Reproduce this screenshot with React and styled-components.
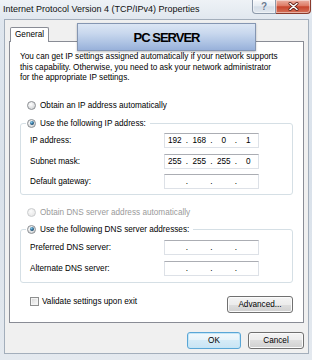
import React from "react";
import styled, { createGlobalStyle } from "styled-components";

const FONT = `"Liberation Sans", Arial, sans-serif`;

const GlobalStyle = createGlobalStyle`
  html, body {
    margin: 0;
    padding: 0;
    background: #dfe6ee;
  }
  body {
    font-family: ${FONT};
  }
`;

const Window = styled.div`
  position: relative;
  width: 312px;
  height: 360px;
  box-sizing: border-box;
  display: flex;
  flex-direction: column;
  overflow: hidden;
  font-family: ${FONT};
  color: #000;
  background: linear-gradient(180deg, #eef2f6 0%, #dfe6ee 6%, #d9e1ea 50%, #e4e9ef 100%);
`;

const TitleBar = styled.div`
  height: 19px;
  flex-shrink: 0;
  display: flex;
  align-items: flex-start;
`;

const Title = styled.div`
  padding-left: 3px;
  line-height: 18px;
  font-size: 9px;
  color: #111;
  white-space: nowrap;
`;

const Controls = styled.div`
  margin-left: auto;
  margin-right: 1px;
  display: flex;
`;

const CaptionButton = styled.div`
  width: ${(p) => p.$w}px;
  height: 14px;
  box-sizing: border-box;
  display: flex;
  align-items: center;
  justify-content: center;
  border: 1px solid ${(p) => (p.$close ? "#8a3a2c" : "#8d9aab")};
  border-top: none;
  border-left-width: ${(p) => (p.$close ? 0 : 1)}px;
  border-radius: ${(p) => (p.$close ? "0 0 4px 0" : "0 0 0 4px")};
  background: ${(p) =>
    p.$close
      ? "linear-gradient(180deg, #ebb1a3 0%, #dd7a64 45%, #c8452c 52%, #d5725a 100%)"
      : "linear-gradient(180deg, #f6f8fb 0%, #e6ecf2 45%, #d5dee8 52%, #e2e8ef 100%)"};
  box-shadow: inset 0 0 0 1px rgba(255, 255, 255, 0.45);
`;

const HelpGlyph = styled.span`
  font: bold 10px ${FONT};
  color: #6a7a90;
  text-shadow: 0 0 1px #fff;
`;

const Body = styled.div`
  flex: 1;
  margin: 0 3px 6px 4px;
  background: #f0f0f0;
  border: 1px solid #a3aebb;
  padding: 7px 4px 4px 4px;
  display: flex;
  flex-direction: column;
`;

const TabStrip = styled.div`
  display: flex;
  padding-left: 1px;
  position: relative;
  z-index: 1;
`;

const Tab = styled.div`
  width: 39px;
  height: 15px;
  box-sizing: border-box;
  border: 1px solid #898c95;
  border-bottom: none;
  border-radius: 2px 2px 0 0;
  background: #fff;
  margin-bottom: -1px;
  padding-left: 4px;
  font-size: 8.2px;
  line-height: 14px;
`;

const Panel = styled.div`
  height: 282px;
  box-sizing: border-box;
  background: #fff;
  border: 1px solid #898c95;
  padding: 10px 10px 0 10px;
  display: flex;
  flex-direction: column;
  font-size: 8.2px;
`;

const Intro = styled.p`
  margin: 0;
  line-height: 10.5px;
  white-space: nowrap;
`;

const OptionRow = styled.label`
  display: flex;
  align-items: center;
  gap: 4px;
  height: 12px;
  margin: ${(p) => p.$mt || 0}px 0 0 ${(p) => (p.$ml === undefined ? 7 : p.$ml)}px;
  color: ${(p) => (p.$disabled ? "#9a9a9a" : "#000")};
  white-space: nowrap;
`;

const Radio = styled.span`
  position: relative;
  flex-shrink: 0;
  width: 9px;
  height: 9px;
  box-sizing: border-box;
  border-radius: 50%;
  border: 1px solid ${(p) => (p.$disabled ? "#c9cbcd" : "#8c8f93")};
  background: ${(p) =>
    p.$disabled
      ? "radial-gradient(circle at 40% 35%, #fbfbfb, #e8e8e8 75%)"
      : "radial-gradient(circle at 40% 35%, #ffffff, #d6d8da 75%, #c4c6c8)"};

  &::after {
    content: "";
    display: ${(p) => (p.$checked ? "block" : "none")};
    position: absolute;
    inset: 1.5px;
    border-radius: 50%;
    background: radial-gradient(circle at 38% 32%, #8ed0f0 0%, #2f6f99 45%, #16334d 90%);
  }
`;

const Group = styled.fieldset`
  margin: ${(p) => p.$mt}px 0 0 0;
  padding: 0 0 0 5px;
  min-inline-size: 0;
  border: 1px solid #d5dfe5;
  border-radius: 3px;
`;

const Legend = styled.legend`
  padding: 0 4px 0 1px;
`;

const Rows = styled.div`
  display: flex;
  flex-direction: column;
  gap: 5.5px;
  padding: ${(p) => p.$pt}px 0 ${(p) => p.$pb}px 4px;
`;

const FieldRow = styled.div`
  display: flex;
  align-items: center;
  height: 15px;
`;

const FieldLabel = styled.span`
  width: 134px;
  flex-shrink: 0;
  white-space: nowrap;
`;

const IpBox = styled.div`
  width: 95px;
  height: 15px;
  box-sizing: border-box;
  display: flex;
  align-items: center;
  background: #fff;
  border: 1px solid #dde1e7;
  border-top-color: #abadb3;
  font-size: 8.2px;
`;

const Octet = styled.span`
  flex: 1;
  text-align: center;
`;

const Dot = styled.span`
  width: 5px;
  text-align: center;
`;

const Footer = styled.div`
  display: flex;
  align-items: flex-start;
  margin-top: 13.5px;
`;

const CheckRow = styled.label`
  display: flex;
  align-items: center;
  gap: 3px;
  height: 10px;
  margin-left: 10px;
  white-space: nowrap;
`;

const CheckBox = styled.span`
  width: 9px;
  height: 9px;
  box-sizing: border-box;
  border: 1px solid #8e8f8f;
  background: linear-gradient(135deg, #d4d4d4 0%, #eeeeee 60%, #fafafa 100%);
  box-shadow: inset 0 0 0 1px #f4f4f4;
`;

const Button = styled.button`
  width: ${(p) => p.$w}px;
  height: 17px;
  box-sizing: border-box;
  margin: 0 0 0 ${(p) => (p.$push ? "auto" : "0")};
  padding: 0;
  border: 1px solid ${(p) => (p.$default ? "#5aa6d6" : "#707070")};
  border-radius: 3px;
  font: 8.2px ${FONT};
  color: #000;
  background: ${(p) =>
    p.$default
      ? "linear-gradient(180deg, #f2f9fd 0%, #e6f3fa 50%, #d5ebf7 50%, #c9e4f4 100%)"
      : "linear-gradient(180deg, #f4f4f4 0%, #ececec 50%, #dedede 50%, #d0d0d0 100%)"};
  box-shadow: inset 0 0 0 1px ${(p) => (p.$default ? "#c4e6f7" : "#fbfbfb")};
`;

const ButtonRow = styled.div`
  display: flex;
  justify-content: flex-end;
  gap: 7px;
  margin-top: 9px;
`;

const Stamp = styled.div`
  position: absolute;
  left: 77px;
  top: 23px;
  width: 179px;
  height: 28px;
  box-sizing: border-box;
  display: flex;
  align-items: center;
  justify-content: center;
  border: 1px solid #8596b2;
  background: linear-gradient(180deg, #dce6f4 0%, #c9d8ee 35%, #afc4e4 70%, #98b1da 100%);
  box-shadow: 0 1px 2px rgba(0, 0, 0, 0.25);
  font: bold 13px ${FONT};
  letter-spacing: -1px;
  color: #000;
`;

function CloseIcon() {
  return (
    <svg width="11" height="9" viewBox="0 0 11 9">
      <path d="M2 1.5 L9 7.5 M9 1.5 L2 7.5" stroke="#5b1d12" strokeWidth="3" strokeLinecap="round" />
      <path d="M2 1.5 L9 7.5 M9 1.5 L2 7.5" stroke="#fff" strokeWidth="1.6" strokeLinecap="round" />
    </svg>
  );
}

function IpField({ value }) {
  const parts = value ? value.split(".") : ["", "", "", ""];
  return (
    <IpBox>
      <Octet>{parts[0]}</Octet>
      <Dot>.</Dot>
      <Octet>{parts[1]}</Octet>
      <Dot>.</Dot>
      <Octet>{parts[2]}</Octet>
      <Dot>.</Dot>
      <Octet>{parts[3]}</Octet>
    </IpBox>
  );
}

const ipRows = [
  { label: "IP address:", value: "192.168.0.1" },
  { label: "Subnet mask:", value: "255.255.255.0" },
  { label: "Default gateway:", value: "" },
];

const dnsRows = [
  { label: "Preferred DNS server:", value: "" },
  { label: "Alternate DNS server:", value: "" },
];

export default function App() {
  return (
    <>
      <GlobalStyle />
      <Window>
        <TitleBar>
          <Title>Internet Protocol Version 4 (TCP/IPv4) Properties</Title>
          <Controls>
            <CaptionButton $w={24}>
              <HelpGlyph>?</HelpGlyph>
            </CaptionButton>
            <CaptionButton $w={35} $close>
              <CloseIcon />
            </CaptionButton>
          </Controls>
        </TitleBar>

        <Body>
          <TabStrip>
            <Tab>General</Tab>
          </TabStrip>
          <Panel>
            <Intro>
              You can get IP settings assigned automatically if your network supports
              <br />
              this capability. Otherwise, you need to ask your network administrator
              <br />
              for the appropriate IP settings.
            </Intro>

            <OptionRow $mt={15.5}>
              <Radio />
              Obtain an IP address automatically
            </OptionRow>

            <Group $mt={6}>
              <Legend>
                <OptionRow $ml={0}>
                  <Radio $checked />
                  Use the following IP address:
                </OptionRow>
              </Legend>
              <Rows $pt={4} $pb={5}>
                {ipRows.map((r) => (
                  <FieldRow key={r.label}>
                    <FieldLabel>{r.label}</FieldLabel>
                    <IpField value={r.value} />
                  </FieldRow>
                ))}
              </Rows>
            </Group>

            <OptionRow $mt={11} $disabled>
              <Radio $disabled />
              Obtain DNS server address automatically
            </OptionRow>

            <Group $mt={5}>
              <Legend>
                <OptionRow $ml={0}>
                  <Radio $checked />
                  Use the following DNS server addresses:
                </OptionRow>
              </Legend>
              <Rows $pt={5} $pb={6}>
                {dnsRows.map((r) => (
                  <FieldRow key={r.label}>
                    <FieldLabel>{r.label}</FieldLabel>
                    <IpField value={r.value} />
                  </FieldRow>
                ))}
              </Rows>
            </Group>

            <Footer>
              <CheckRow>
                <CheckBox />
                Validate settings upon exit
              </CheckRow>
              <Button $w={66} $push>
                Advanced...
              </Button>
            </Footer>
          </Panel>

          <ButtonRow>
            <Button $w={54} $default>
              OK
            </Button>
            <Button $w={56}>Cancel</Button>
          </ButtonRow>
        </Body>

        <Stamp>PC SERVER</Stamp>
      </Window>
    </>
  );
}
